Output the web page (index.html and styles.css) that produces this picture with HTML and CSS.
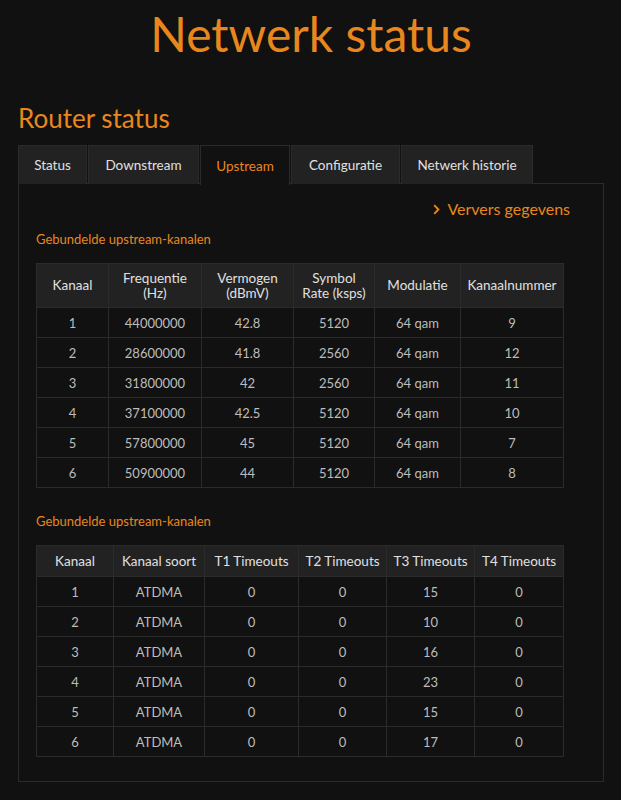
FILE: index.html
```html
<!DOCTYPE html>
<html lang="nl">
<head>
<meta charset="utf-8">
<title>Netwerk status</title>
<link rel="stylesheet" href="styles.css">
</head>
<body>
<h1 class="page-title">Netwerk status</h1>
<h2 class="section-title">Router status</h2>
<div class="tabs">
  <div class="tab tab-status">Status</div>
  <div class="tab tab-down">Downstream</div>
  <div class="tab tab-up active">Upstream</div>
  <div class="tab tab-conf">Configuratie</div>
  <div class="tab tab-hist">Netwerk historie</div>
</div>
<div class="panel">
  <div class="refresh"><svg class="chev" width="7" height="11" viewBox="0 0 7 11"><path d="M1.2 1.2 L5.4 5.5 L1.2 9.8" fill="none" stroke="#e8871e" stroke-width="1.9"/></svg>Ververs gegevens</div>
  <h3 class="table-title">Gebundelde upstream-kanalen</h3>
  <table class="data t1">
    <colgroup>
      <col class="c1"><col class="c2"><col class="c3"><col class="c4"><col class="c5"><col class="c6">
    </colgroup>
    <thead>
      <tr><th>Kanaal</th><th>Frequentie<br>(Hz)</th><th>Vermogen<br>(dBmV)</th><th>Symbol<br>Rate (ksps)</th><th>Modulatie</th><th>Kanaalnummer</th></tr>
    </thead>
    <tbody>
      <tr><td>1</td><td>44000000</td><td>42.8</td><td>5120</td><td>64 qam</td><td>9</td></tr>
      <tr><td>2</td><td>28600000</td><td>41.8</td><td>2560</td><td>64 qam</td><td>12</td></tr>
      <tr><td>3</td><td>31800000</td><td>42</td><td>2560</td><td>64 qam</td><td>11</td></tr>
      <tr><td>4</td><td>37100000</td><td>42.5</td><td>5120</td><td>64 qam</td><td>10</td></tr>
      <tr><td>5</td><td>57800000</td><td>45</td><td>5120</td><td>64 qam</td><td>7</td></tr>
      <tr><td>6</td><td>50900000</td><td>44</td><td>5120</td><td>64 qam</td><td>8</td></tr>
    </tbody>
  </table>
  <h3 class="table-title second">Gebundelde upstream-kanalen</h3>
  <table class="data t2">
    <colgroup>
      <col class="d1"><col class="d2"><col class="d3"><col class="d4"><col class="d5"><col class="d6">
    </colgroup>
    <thead>
      <tr><th>Kanaal</th><th>Kanaal soort</th><th>T1 Timeouts</th><th>T2 Timeouts</th><th>T3 Timeouts</th><th>T4 Timeouts</th></tr>
    </thead>
    <tbody>
      <tr><td>1</td><td>ATDMA</td><td>0</td><td>0</td><td>15</td><td>0</td></tr>
      <tr><td>2</td><td>ATDMA</td><td>0</td><td>0</td><td>10</td><td>0</td></tr>
      <tr><td>3</td><td>ATDMA</td><td>0</td><td>0</td><td>16</td><td>0</td></tr>
      <tr><td>4</td><td>ATDMA</td><td>0</td><td>0</td><td>23</td><td>0</td></tr>
      <tr><td>5</td><td>ATDMA</td><td>0</td><td>0</td><td>15</td><td>0</td></tr>
      <tr><td>6</td><td>ATDMA</td><td>0</td><td>0</td><td>17</td><td>0</td></tr>
    </tbody>
  </table>
</div>
</body>
</html>
```

FILE: styles.css
```css
html, body {
  margin: 0;
  padding: 0;
  background: #111111;
}
body {
  font-family: Lato, "Open Sans", sans-serif;
  color: #cfcfcf;
  padding: 0 17px 0 18px;
  width: 586px;
}
.page-title {
  margin: 0;
  padding-top: 6px;
  height: 64px;
  text-align: center;
  font-size: 48px;
  font-weight: 400;
  color: #e8871e;
  line-height: 56px;
}
.section-title {
  margin: 0;
  padding-top: 32px;
  height: 43px;
  font-size: 26px;
  font-weight: 400;
  color: #e8871e;
  line-height: 32px;
}
.tabs {
  display: flex;
  height: 39px;
}
.tab {
  box-sizing: border-box;
  height: 39px;
  background: #222222;
  border: 1px solid #2b2b2b;
  border-bottom: none;
  color: #e0e0e0;
  font-size: 13.5px;
  display: flex;
  align-items: center;
  justify-content: center;
  margin-right: 1px;
}
.tab-status { width: 69px; }
.tab-down { width: 111px; }
.tab-up { width: 90px; }
.tab-conf { width: 109px; }
.tab-hist { width: 132px; }
.tab.active {
  background: #111111;
  color: #e8871e;
  height: 40px;
  position: relative;
  z-index: 1;
}
.panel {
  box-sizing: border-box;
  border: 1px solid #2b2b2b;
  height: 599px;
  padding: 14px 17px 0 17px;
  margin-top: -1px;
}
.refresh {
  display: flex;
  justify-content: flex-end;
  align-items: center;
  color: #e8871e;
  font-size: 16px;
  line-height: 22px;
  padding-right: 16px;
}
.chev {
  margin-right: 7px;
}
.table-title {
  margin: 0;
  padding-top: 8px;
  height: 43px;
  box-sizing: border-box;
  font-size: 13px;
  font-weight: 400;
  color: #e8871e;
  line-height: 22px;
}
.table-title.second {
  padding-top: 22px;
  height: 57px;
}
.data {
  border-collapse: collapse;
  width: 527px;
  table-layout: fixed;
  font-size: 13px;
}
.data th, .data td {
  border: 1px solid #2b2b2b;
  text-align: center;
  padding: 0;
}
.data th {
  background: #222222;
  color: #e0e0e0;
  font-weight: 400;
  font-size: 13.5px;
  line-height: 15px;
}
.data td {
  color: #bdbdbd;
  height: 29px;
}
.t1 th { height: 43px; }
.t2 th { height: 30px; }
.c1 { width: 72px; }
.c2 { width: 93px; }
.c3 { width: 92px; }
.c4 { width: 81px; }
.c5 { width: 86px; }
.c6 { width: 103px; }
.d1 { width: 77px; }
.d2 { width: 91px; }
.d3 { width: 94px; }
.d4 { width: 88px; }
.d5 { width: 88px; }
.d6 { width: 89px; }
```
